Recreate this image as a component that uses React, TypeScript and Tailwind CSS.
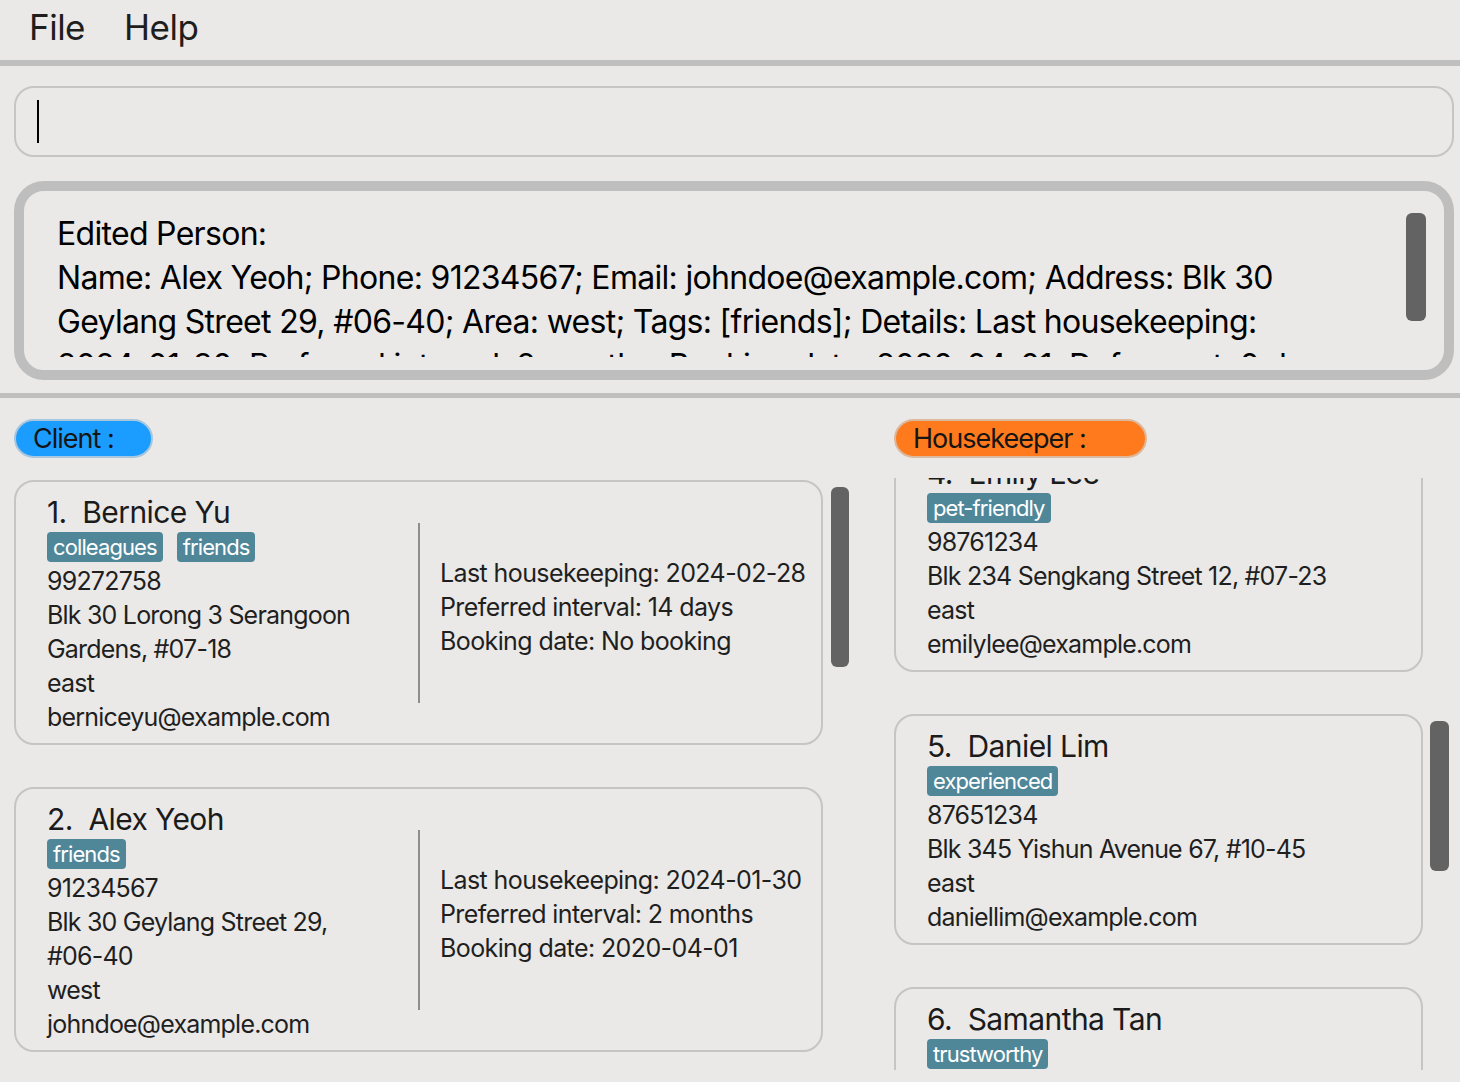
import React from "react";

interface Person {
  index: number;
  name: string;
  tags: string[];
  phone: string;
  address: string;
  area: string;
  email: string;
  details?: string[];
}

const clients: Person[] = [
  {
    index: 1,
    name: "Bernice Yu",
    tags: ["colleagues", "friends"],
    phone: "99272758",
    address: "Blk 30 Lorong 3 Serangoon Gardens, #07-18",
    area: "east",
    email: "berniceyu@example.com",
    details: ["Last housekeeping: 2024-02-28", "Preferred interval: 14 days", "Booking date: No booking"],
  },
  {
    index: 2,
    name: "Alex Yeoh",
    tags: ["friends"],
    phone: "91234567",
    address: "Blk 30 Geylang Street 29, #06-40",
    area: "west",
    email: "johndoe@example.com",
    details: ["Last housekeeping: 2024-01-30", "Preferred interval: 2 months", "Booking date: 2020-04-01"],
  },
];

const housekeepers: Person[] = [
  {
    index: 4,
    name: "Emily Lee",
    tags: ["pet-friendly"],
    phone: "98761234",
    address: "Blk 234 Sengkang Street 12, #07-23",
    area: "east",
    email: "emilylee@example.com",
  },
  {
    index: 5,
    name: "Daniel Lim",
    tags: ["experienced"],
    phone: "87651234",
    address: "Blk 345 Yishun Avenue 67, #10-45",
    area: "east",
    email: "daniellim@example.com",
  },
  {
    index: 6,
    name: "Samantha Tan",
    tags: ["trustworthy"],
    phone: "81234567",
    address: "Blk 12 Tampines Street 45, #05-12",
    area: "east",
    email: "samanthatan@example.com",
  },
];

// keep tokens like "#06-40" from breaking at the hyphen
const Words = ({ text }: { text: string }) => (
  <>
    {text.split(" ").map((w, i) => (
      <React.Fragment key={i}>
        {i > 0 && " "}
        <span className="whitespace-nowrap">{w}</span>
      </React.Fragment>
    ))}
  </>
);

const Tag = ({ label }: { label: string }) => (
  <span className="h-[30px] px-[6px] rounded-[4px] bg-[#4f8799] text-white text-[22px] leading-[30px] tracking-[-0.9px]">
    {label}
  </span>
);

const Info = ({ p }: { p: Person }) => (
  <div className="flex flex-col">
    <div className="text-[30px] leading-[40px] text-[#1b1b1b] tracking-[-0.6px]">
      {p.index}.&nbsp;&nbsp;{p.name}
    </div>
    <div className="flex gap-[14px] mb-[2px]">
      {p.tags.map((t) => (
        <Tag key={t} label={t} />
      ))}
    </div>
    <div className="text-[25px] leading-[34px] text-[#1f1f1f] tracking-[-0.8px]">
      <div>{p.phone}</div>
      <div>
        <Words text={p.address} />
      </div>
      <div>{p.area}</div>
      <div>{p.email}</div>
    </div>
  </div>
);

const ClientCard = ({ p }: { p: Person }) => (
  <div className="w-[809px] border-2 border-[#c6c5c3] rounded-[20px] pl-[31px] pt-[10px] pb-[9px] flex items-center">
    <div className="w-[360px]">
      <Info p={p} />
    </div>
    <div className="w-[2px] h-[180px] bg-[#8e8e8e] ml-[11px]" />
    <div className="ml-[20px] mb-[12px] text-[25px] leading-[34px] text-[#1f1f1f] tracking-[-0.6px]">
      {p.details?.map((d) => (
        <div key={d}>{d}</div>
      ))}
    </div>
  </div>
);

const HousekeeperCard = ({ p }: { p: Person }) => (
  <div className="w-[529px] border-2 border-[#c6c5c3] rounded-[20px] pl-[31px] pt-[10px] pb-[9px]">
    <Info p={p} />
  </div>
);

const result =
  "Name: Alex Yeoh; Phone: 91234567; Email: johndoe@example.com; Address: Blk 30 Geylang Street 29, #06-40; Area: west; Tags: [friends]; Details: Last housekeeping: 2024-01-30; Preferred interval: 2 months; Booking date: 2020-04-01; Deferment: 0 days";

export default function App() {
  return (
    <div
      className="w-[1460px] h-[1082px] bg-[#eae9e7] overflow-hidden flex flex-col"
      style={{ fontFamily: "Inter, 'Noto Sans', sans-serif" }}
    >
      {/* menu */}
      <div className="h-[60px] flex items-center pl-[29px] pb-[5px] gap-[39px] text-[35px] text-[#1e1e1e] tracking-[-0.5px]">
        <span>File</span>
        <span>Help</span>
      </div>
      <div className="h-[6px] bg-[#bfbfbf]" />

      {/* command box */}
      <div className="ml-[14px] mr-[6px] mt-[20px] h-[71px] border-2 border-[#c6c5c3] rounded-[20px] flex items-center pl-[21px]">
        <div className="w-[2px] h-[43px] bg-black" />
      </div>

      {/* result display */}
      <div className="ml-[14px] mr-[6px] mt-[24px] h-[199px] border-[10px] border-[#bebebe] rounded-[30px] flex">
        <div className="flex-1 pl-[33px] pt-[21px] pr-[14px]">
          <div className="h-[145px] overflow-hidden text-[32px] leading-[44px] text-black tracking-[-0.7px]">
            Edited Person:
            <br />
            <Words text={result} />
          </div>
        </div>
        <div className="w-[20px] h-[108px] mt-[22px] mr-[18px] rounded-[6px] bg-[#636363]" />
      </div>

      <div className="mt-[13px] h-[5px] bg-[#bfbfbf]" />

      {/* lists */}
      <div className="flex pl-[14px] pt-[21px]">
        <div className="w-[880px] flex flex-col">
          <div className="w-[139px] h-[39px] rounded-full bg-[#1a9dff] border-2 border-[#a8c6de] pl-[17px] text-[27px] leading-[35px] text-[#151515] tracking-[-1px]">
            Client :
          </div>
          <div className="flex mt-[20px] h-[592px] overflow-hidden">
            <div className="flex flex-col gap-[42px] pt-[2px]">
              {clients.map((c) => (
                <ClientCard key={c.index} p={c} />
              ))}
            </div>
            <div className="w-[18px] h-[180px] mt-[9px] ml-[8px] rounded-[6px] bg-[#636363]" />
          </div>
        </div>
        <div className="flex flex-col">
          <div className="w-[253px] h-[39px] rounded-full bg-[#ff7a1c] border-2 border-[#dcb89c] pl-[17px] text-[27px] leading-[35px] text-[#151515] tracking-[-1px]">
            Housekeeper :
          </div>
          <div className="flex mt-[20px] h-[592px] overflow-hidden">
            <div className="flex flex-col gap-[42px] -mt-[37px]">
              {housekeepers.map((h) => (
                <HousekeeperCard key={h.index} p={h} />
              ))}
            </div>
            <div className="w-[19px] h-[150px] mt-[243px] ml-[7px] rounded-[6px] bg-[#636363]" />
          </div>
        </div>
      </div>
    </div>
  );
}
